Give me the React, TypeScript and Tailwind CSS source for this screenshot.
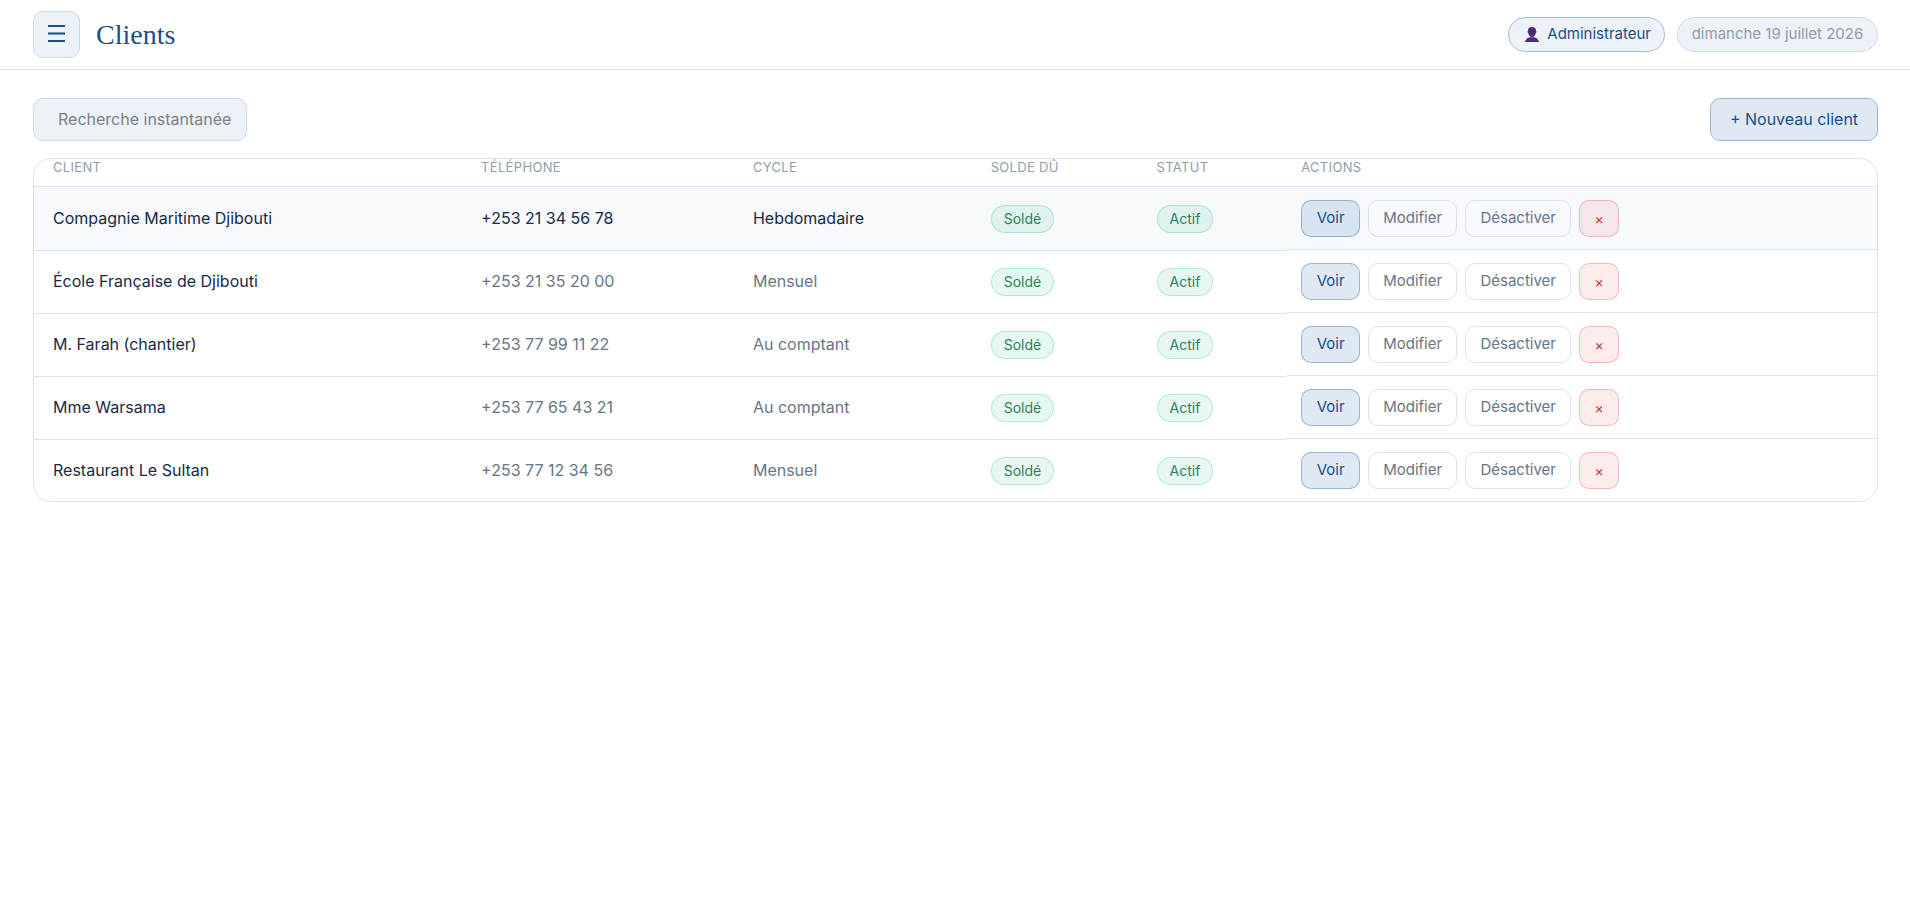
import React, { useState } from 'react';

interface Client {
  nom: string;
  telephone: string;
  cycle: string;
}

const CLIENTS: Client[] = [
  { nom: 'Compagnie Maritime Djibouti', telephone: '+253 21 34 56 78', cycle: 'Hebdomadaire' },
  { nom: 'École Française de Djibouti', telephone: '+253 21 35 20 00', cycle: 'Mensuel' },
  { nom: 'M. Farah (chantier)', telephone: '+253 77 99 11 22', cycle: 'Au comptant' },
  { nom: 'Mme Warsama', telephone: '+253 77 65 43 21', cycle: 'Au comptant' },
  { nom: 'Restaurant Le Sultan', telephone: '+253 77 12 34 56', cycle: 'Mensuel' },
];

const Badge: React.FC<{ children: React.ReactNode }> = ({ children }) => (
  <span className="inline-flex h-7 items-center rounded-full border border-[#10b981]/25 bg-[#10b981]/10 px-3 text-sm text-[#2b8060]">
    {children}
  </span>
);

const Header: React.FC = () => (
  <header className="flex h-[70px] items-center justify-between border-b border-[#dae3ed] pr-8 pl-[33px]">
    <div className="flex items-center gap-4">
      <button
        type="button"
        aria-label="Menu"
        className="flex size-[47px] items-center justify-center rounded-[10px] border border-[#ccd9e8] bg-[#edf2f9] text-[#1a4f8a]"
      >
        <svg className="mb-0.5 h-[17px] w-[17px]" viewBox="0 0 17 17" fill="none" stroke="currentColor" strokeWidth="2">
          <path d="M0 1h17M0 8.500h17M0 16h17" />
        </svg>
      </button>
      <h1 className="font-['Liberation_Serif',serif] text-[28px] leading-9 text-[#1a4f8a]">Clients</h1>
    </div>
    <div className="flex items-center gap-3 text-[15px]">
      <span className="flex h-[35px] items-center gap-2 rounded-full border border-[#a6bbd5] bg-[#edf2f9] pr-[13px] pl-4 text-[#1a4f8a]">
        <svg className="h-[15px] w-[14px]" viewBox="0 0 14 15">
          <path
            fill="#4d2c7e"
            d="M7 0C4.300 0 3 1.300 3 3.200v.8c-.6.3-.5 1.700.2 1.900C3.500 7.600 4.300 8.700 5.200 9.200v1C3 10.700.6 11.600 0 15h14c-.6-3.400-3-4.300-5.200-4.800v-1c.9-.5 1.700-1.600 2-3.300.7-.2.8-1.600.2-1.900v-.8C11 1.300 9.700 0 7 0z"
          />
          <path stroke="#edf2f9" strokeOpacity=".6" strokeWidth=".6" fill="none" d="M4.500 9.400C6 10.300 8 10.300 9.500 9.400" />
        </svg>
        Administrateur
      </span>
      <span className="flex h-[35px] min-w-[201px] items-center justify-center rounded-full border border-[#ccd9e8] bg-[#edf2f9] text-[#929daa]">
        dimanche 19 juillet 2026
      </span>
    </div>
  </header>
);

const ACTION = 'flex h-[37px] items-center justify-center rounded-[10px] border';

const App: React.FC = () => {
  const [recherche, setRecherche] = useState('');
  const clients = CLIENTS.filter(c => c.nom.toLowerCase().includes(recherche.toLowerCase()));

  return (
    <div className="min-h-screen bg-white font-[Inter,'Liberation_Sans',sans-serif] text-[#172b45]">
      <Header />
      <main className="pt-7 pr-8 pl-[33px]">
        <div className="mb-[17px] flex items-center justify-between">
          <input
            type="text"
            aria-label="Recherche instantanée"
            placeholder="Recherche instantanée"
            value={recherche}
            onChange={e => setRecherche(e.target.value)}
            className="h-[43px] w-[214px] rounded-[10px] border border-[#ccd9e8] bg-[#edf2f9] pr-2 pb-0.5 pl-6 text-base outline-none placeholder:text-[#7a7f87]"
          />
          <button
            type="button"
            className="flex h-[43px] min-w-[168px] items-center justify-center rounded-[10px] border border-[#9db5d5] bg-[#dfe9f4] pb-0.5 text-base text-[#1a4f8a]"
          >
            + Nouveau client
          </button>
        </div>

        <div className="overflow-hidden rounded-[18px] border border-[#dae3ed]">
          <table className="w-full table-fixed border-separate border-spacing-0 text-left text-base">
            <thead>
              <tr className="h-7 align-top text-[13px] leading-4 tracking-wide text-[#929daa] uppercase [&>th]:border-b [&>th]:border-[#dae3ed] [&>th]:pl-3.5 [&>th]:font-normal">
                <th className="w-[23.5%] pl-[19px]!">Client</th>
                <th className="w-[14.75%]">Téléphone</th>
                <th className="w-[12.9%]">Cycle</th>
                <th className="w-[9%]">Solde dû</th>
                <th className="w-[7.85%]">Statut</th>
                <th>Actions</th>
              </tr>
            </thead>
            <tbody>
              {clients.map((client, i) => {
                const first = i === 0;
                const last = i === clients.length - 1;
                // separators sit on top of the next row, except in the actions column
                const cell = first ? 'pl-3.5' : 'border-t border-[#dae3ed] pl-3.5';
                const text = first ? 'pb-0.5' : 'pb-0.5 text-[#687585]';
                return (
                  <tr key={client.nom} className={`${last ? 'h-[62px]' : 'h-[63px]'} ${first ? 'bg-[#f7f9fd]' : ''}`}>
                    <td className={`${cell} pb-0.5 pl-[19px]!`}>{client.nom}</td>
                    <td className={`${cell} ${text}`}>{client.telephone}</td>
                    <td className={`${cell} ${text}`}>{client.cycle}</td>
                    <td className={cell}><Badge>Soldé</Badge></td>
                    <td className={cell}><Badge>Actif</Badge></td>
                    <td className={`pt-[13px] pl-3.5 align-top ${last ? '' : 'border-b border-[#dae3ed]'}`}>
                      <div className="flex gap-2 text-[15px]">
                        <button type="button" className={`${ACTION} min-w-[59px] border-[#1a4f8a]/35 bg-[#0a56aa]/13 text-[#1a4f8a]`}>Voir</button>
                        <button type="button" className={`${ACTION} min-w-[89px] border-[#dae3ed] text-[#687585]`}>Modifier</button>
                        <button type="button" className={`${ACTION} min-w-[106px] border-[#dae3ed] text-[#687585]`}>Désactiver</button>
                        <button type="button" aria-label="Supprimer" className={`${ACTION} min-w-10 border-[#e04444]/30 bg-[#e04444]/10 text-sm text-[#b93a3a]`}>×</button>
                      </div>
                    </td>
                  </tr>
                );
              })}
            </tbody>
          </table>
        </div>
      </main>
    </div>
  );
};

export default App;
